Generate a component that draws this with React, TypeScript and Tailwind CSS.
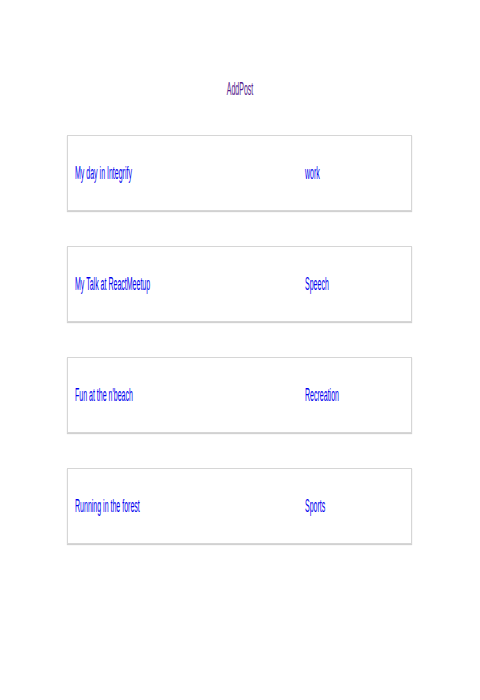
import React from 'react';

const posts = [
  { title: 'My day in Integrify', category: 'work' },
  { title: 'My Talk at ReactMeetup', category: 'Speech' },
  { title: "Fun at the n'beach", category: 'Recreation' },
  { title: 'Running in the forest', category: 'Sports' },
];

const App = () => {
  return (
    <div className="min-h-[700px] bg-white pt-[78px] font-['Liberation_Sans',Arial,sans-serif] text-[18px] leading-[22px]">
      <div className="flex justify-center">
        <span className="inline-block scale-x-[0.39] text-[#551a8b]">AddPost</span>
      </div>

      <div className="ml-[67px] mt-[35px] flex w-[345px] flex-col gap-[35px]">
        {posts.map((post, index) => (
          <div
            key={index}
            className="flex h-[76px] items-center border border-[#d6d6d6] pl-[7px] shadow-[0_1px_1px_rgba(0,0,0,0.18)]"
          >
            <div className="w-[230px] shrink-0">
              <span className="inline-block origin-left scale-x-[0.39] whitespace-nowrap text-[#0000ee]">
                {post.title}
              </span>
            </div>
            <div>
              <span className="inline-block origin-left scale-x-[0.39] whitespace-nowrap text-[#0000ee]">
                {post.category}
              </span>
            </div>
          </div>
        ))}
      </div>
    </div>
  );
};

export default App;
